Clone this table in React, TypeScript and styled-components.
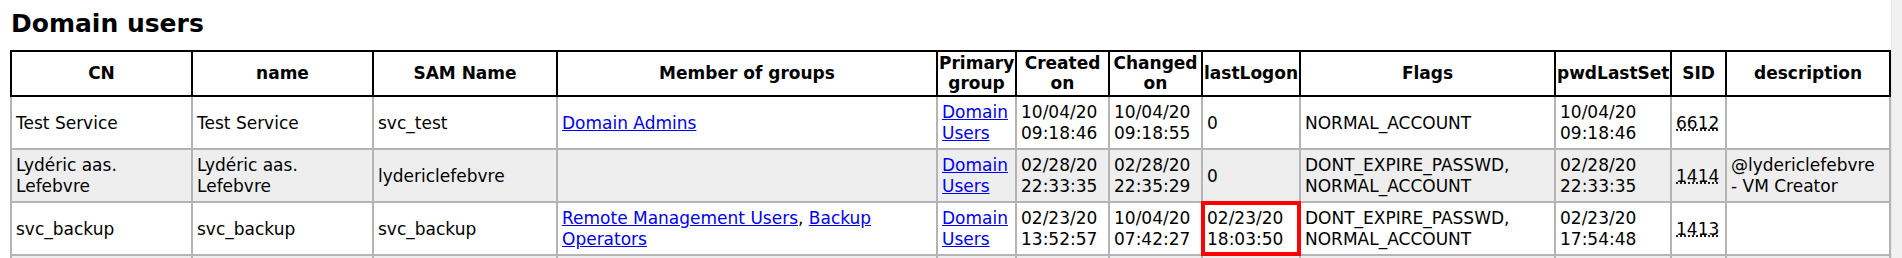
import React from 'react';
import styled, { createGlobalStyle } from 'styled-components';

const GlobalStyle = createGlobalStyle`
    html, body {
        margin: 0;
        padding: 0;
        background: #ffffff;
        overflow: hidden;
    }
    body {
        font-family: "DejaVu Sans", Verdana, sans-serif;
        color: #000000;
    }
`;

const Page = styled.div`
    display: flex;
    height: 258px;
    overflow: hidden;
`;

const Content = styled.div`
    flex: 1;
    min-width: 0;
    padding: 0 0 0 10px;
`;

const ScrollTrack = styled.div`
    width: 10px;
    flex-shrink: 0;
    background-color: #f1f1f1;
    border-left: 1px solid #e8e8e8;
`;

const Title = styled.h2`
    margin: 9px 0 11px 1px;
    font-size: 25px;
    line-height: 30px;
    font-weight: bold;
`;

const Table = styled.table`
    border-collapse: collapse;
    table-layout: fixed;
    width: 1881px;
    font-size: 17px;
`;

const Col = styled.col<{ $w: number }>`
    width: ${(p) => p.$w}px;
`;

const HeadCell = styled.th`
    border: 2px solid #000000;
    padding: 1px 1px 2px;
    font-size: 17px;
    line-height: 20px;
    font-weight: bold;
    text-align: center;
    vertical-align: middle;
    background: #ffffff;
`;

const Row = styled.tr`
    background-color: #ffffff;
    &:nth-child(even) {
        background-color: #eeeeee;
    }
`;

const Cell = styled.td<{ $marked?: boolean }>`
    border: 2px solid #b4b4b4;
    padding: 5px 4px 4px;
    height: 42px;
    line-height: 21px;
    text-align: left;
    vertical-align: middle;
    ${(p) => p.$marked && `
        outline: 4px solid #ff0000;
        outline-offset: -3px;
    `}
`;

const GroupLink = styled.a`
    color: #0000ee;
    text-decoration: underline;
`;

const Sid = styled.abbr`
    text-decoration: underline dotted;
    cursor: help;
`;

type User = {
    cn: string;
    name: string;
    sam: string;
    groups: string[];
    primary: string;
    created: string[];
    changed: string[];
    lastLogon: string[];
    flags: string[];
    pwdLastSet: string[];
    sid: string;
    description: string;
    marked?: boolean;
};

const columns = [
    { label: 'CN', width: 181 },
    { label: 'name', width: 181 },
    { label: 'SAM Name', width: 184 },
    { label: 'Member of groups', width: 380 },
    { label: 'Primary group', width: 79 },
    { label: 'Created on', width: 93 },
    { label: 'Changed on', width: 93 },
    { label: 'lastLogon', width: 98 },
    { label: 'Flags', width: 255 },
    { label: 'pwdLastSet', width: 116 },
    { label: 'SID', width: 55 },
    { label: 'description', width: 164 },
];

const users: User[] = [
    {
        cn: 'Test Service',
        name: 'Test Service',
        sam: 'svc_test',
        groups: ['Domain Admins'],
        primary: 'Domain Users',
        created: ['10/04/20', '09:18:46'],
        changed: ['10/04/20', '09:18:55'],
        lastLogon: ['0'],
        flags: ['NORMAL_ACCOUNT'],
        pwdLastSet: ['10/04/20', '09:18:46'],
        sid: '6612',
        description: '',
    },
    {
        cn: 'Lydéric aas. Lefebvre',
        name: 'Lydéric aas. Lefebvre',
        sam: 'lydericlefebvre',
        groups: [],
        primary: 'Domain Users',
        created: ['02/28/20', '22:33:35'],
        changed: ['02/28/20', '22:35:29'],
        lastLogon: ['0'],
        flags: ['DONT_EXPIRE_PASSWD', 'NORMAL_ACCOUNT'],
        pwdLastSet: ['02/28/20', '22:33:35'],
        sid: '1414',
        description: '@lydericlefebvre - VM Creator',
    },
    {
        cn: 'svc_backup',
        name: 'svc_backup',
        sam: 'svc_backup',
        groups: ['Remote Management Users', 'Backup Operators'],
        primary: 'Domain Users',
        created: ['02/23/20', '13:52:57'],
        changed: ['10/04/20', '07:42:27'],
        lastLogon: ['02/23/20', '18:03:50'],
        flags: ['DONT_EXPIRE_PASSWD', 'NORMAL_ACCOUNT'],
        pwdLastSet: ['02/23/20', '17:54:48'],
        sid: '1413',
        description: '',
        marked: true,
    },
];

const DateTime = ({ value }: { value: string[] }) => <>{value.join(' ')}</>;

const App = () => {
    return (
        <>
            <GlobalStyle />
            <Page>
                <Content>
                    <Title>Domain users</Title>
                    <Table>
                        <colgroup>
                            {columns.map((c) => (
                                <Col key={c.label} $w={c.width} />
                            ))}
                        </colgroup>
                        <thead>
                            <tr>
                                {columns.map((c) => (
                                    <HeadCell key={c.label}>{c.label}</HeadCell>
                                ))}
                            </tr>
                        </thead>
                        <tbody>
                            {users.map((u) => (
                                <Row key={u.sam}>
                                    <Cell>{u.cn}</Cell>
                                    <Cell>{u.name}</Cell>
                                    <Cell>{u.sam}</Cell>
                                    <Cell>
                                        {u.groups.map((g, i) => (
                                            <React.Fragment key={g}>
                                                {i > 0 && ', '}
                                                <GroupLink href="#">{g}</GroupLink>
                                            </React.Fragment>
                                        ))}
                                    </Cell>
                                    <Cell>
                                        <GroupLink href="#">{u.primary}</GroupLink>
                                    </Cell>
                                    <Cell><DateTime value={u.created} /></Cell>
                                    <Cell><DateTime value={u.changed} /></Cell>
                                    <Cell $marked={u.marked}><DateTime value={u.lastLogon} /></Cell>
                                    <Cell>{u.flags.join(', ')}</Cell>
                                    <Cell><DateTime value={u.pwdLastSet} /></Cell>
                                    <Cell>
                                        <Sid title={`S-1-5-21-3453094176-2403561963-1624624941-${u.sid}`}>{u.sid}</Sid>
                                    </Cell>
                                    <Cell>{u.description}</Cell>
                                </Row>
                            ))}
                            {/* next row is cut off by the window, only its borders show */}
                            <Row>
                                {columns.map((c) => (
                                    <Cell key={c.label} />
                                ))}
                            </Row>
                        </tbody>
                    </Table>
                </Content>
                <ScrollTrack />
            </Page>
        </>
    );
};

export default App;
